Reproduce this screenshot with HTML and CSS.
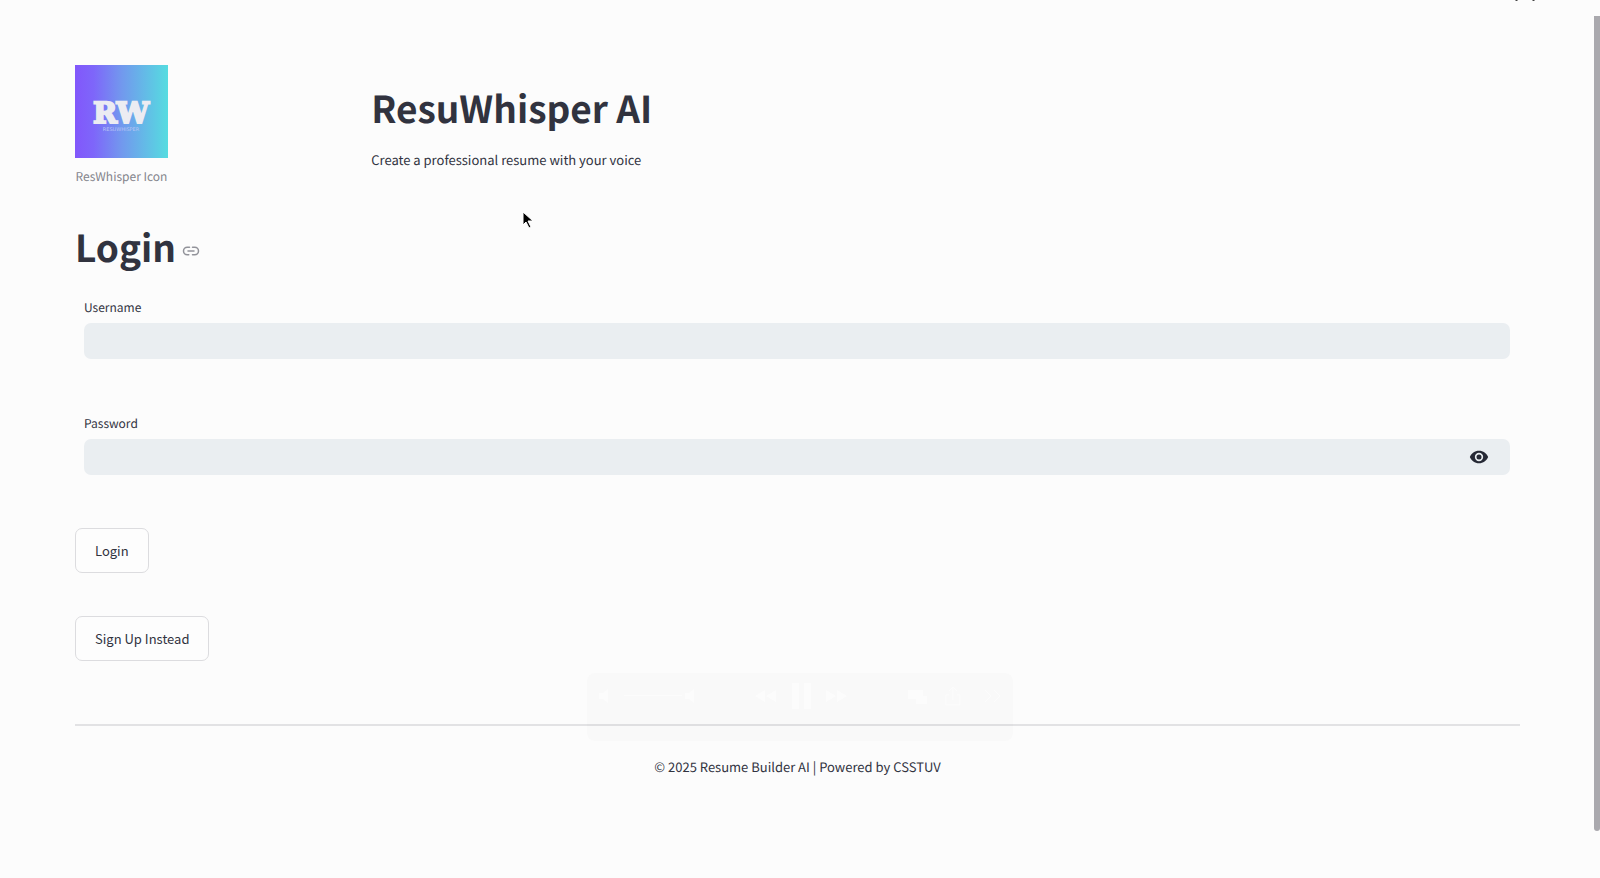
FILE: index.html
```html
<!DOCTYPE html>
<html lang="en">
<head>
<meta charset="utf-8">
<title>ResuWhisper AI</title>
<link rel="stylesheet" href="styles.css">
</head>
<body>
<main class="page">
  <header class="hero">
    <figure class="brand">
      <svg class="logo" viewBox="0 0 93 93" role="img" aria-label="RW">
        <defs>
          <linearGradient id="fade" x1="0" x2="1" y1="0" y2="0">
            <stop offset="0" stop-color="#8257fb"/>
            <stop offset=".2" stop-color="#7e66fa"/>
            <stop offset=".5" stop-color="#7298ee"/>
            <stop offset="1" stop-color="#55dce0"/>
          </linearGradient>
        </defs>
        <rect width="93" height="93" fill="url(#fade)"/>
        <text class="monogram" x="46" y="58" text-anchor="middle">RW</text>
        <text class="wordmark" x="46" y="66" text-anchor="middle">RESUWHISPER</text>
      </svg>
      <figcaption class="caption">ResWhisper Icon</figcaption>
    </figure>
    <div class="intro">
      <h1 class="title">ResuWhisper AI</h1>
      <p class="tagline">Create a professional resume with your voice</p>
    </div>
  </header>

  <form class="login">
    <div class="heading">
      <h1 class="title" id="login">Login</h1>
      <a class="anchor" href="#login" aria-label="Link to Login">
        <svg viewBox="0 0 24 24" fill="none" stroke="currentColor" stroke-width="2" stroke-linecap="round"><path d="M9 17H7A5 5 0 0 1 7 7h3M14 7h3a5 5 0 0 1 0 10h-3M8 12h8"/></svg>
      </a>
    </div>
    <div class="field">
      <label class="label" for="username">Username</label>
      <div class="box"><input class="input" id="username" type="text"></div>
    </div>
    <div class="field">
      <label class="label" for="password">Password</label>
      <div class="box">
        <input class="input" id="password" type="password">
        <button class="reveal" type="button" aria-label="Show password">
          <svg viewBox="0 0 24 24" fill="currentColor"><path fill-rule="evenodd" d="M12 4.500C7 4.500 2.730 7.610 1 12c1.730 4.390 6 7.500 11 7.500s9.270-3.110 11-7.500C21.270 7.610 17 4.500 12 4.500zM12 17a5 5 0 1 1 0-10 5 5 0 0 1 0 10zm0-8a3 3 0 1 0 0 6 3 3 0 0 0 0-6z"/></svg>
        </button>
      </div>
    </div>
    <div class="actions">
      <button class="button" type="button">Login</button>
      <button class="button" type="button">Sign Up Instead</button>
    </div>
  </form>

  <footer class="footer">© 2025 Resume Builder AI | Powered by CSSTUV</footer>
</main>

<div class="player" aria-hidden="true">
  <svg viewBox="0 0 426 68" fill="currentColor">
    <path d="M12 20h4l5-4v14l-5-4h-4zM37 22h58v1H37zM98 20h4l5-4v14l-5-4h-4zM168 23l10-6v12zM179 23l10-6v12zM205 10h7v26h-7zM217 10h7v26h-7zM239 17l10 6-10 6zM250 17l10 6-10 6zM321 17h15v6h4v8h-11v-5h-8z"/>
    <path d="M362 22h-3v10h14V22h-3M366 27V14M362 18l4-4 4 4M398 17l6 6-6 6M407 17l6 6-6 6" fill="none" stroke="currentColor" stroke-width="1"/>
  </svg>
</div>

<svg class="clipped" viewBox="0 0 24 2" aria-hidden="true"><path d="M3 0h3L5 1H4zM20 0h3l-1 1h-1z" fill="#444"/></svg>
<svg class="cursor" viewBox="0 0 12 18" aria-hidden="true"><path d="M1 1v13l3-3 3 6 2-1-3-6h5z" fill="#000" stroke="#fff" stroke-width="1"/></svg>
<div class="scrollbar" aria-hidden="true"></div>
</body>
</html>
```
FILE: styles.css
```css
* { box-sizing: border-box; }

body {
  margin: 0;
  min-height: 100vh;
  overflow: hidden;
  background: #fcfcfc;
  color: #31333f;
  font: 13px/24px "Noto Sans CJK SC", "Noto Sans", sans-serif;
  text-rendering: geometricPrecision;
}

.page { padding: 65px 80px 0 75px; }

.hero {
  display: grid;
  grid-template-columns: 1fr 4fr;
  gap: 9px;
}

.brand {
  display: flex;
  flex-direction: column;
  align-items: center;
  width: 93px;
  margin: 0;
}

.logo { display: block; width: 93px; height: 93px; }

.monogram {
  fill: #ececf2;
  stroke: #ececf2;
  stroke-width: 2;
  font: bold 29px "DejaVu Serif", serif;
}

.wordmark { fill: #b9c4f5; font: 5px "DejaVu Sans", sans-serif; }

.caption {
  margin-top: 8px;
  color: #84858c;
  font-size: 12px;
  line-height: 22px;
  white-space: nowrap;
}

.title {
  margin: 0;
  font-size: 37px;
  font-weight: 700;
  line-height: 48px;
}

.intro { padding-top: 18px; }

.tagline { margin: 17px 0 0; }

.heading {
  display: flex;
  align-items: center;
  gap: 6px;
  margin-top: 34px;
}

.anchor { display: flex; margin-top: 10px; color: #92939a; }
.anchor svg { width: 18px; height: 18px; }

.field { padding: 0 10px 0 9px; }
.heading + .field { margin-top: 26px; }
.field + .field { margin-top: 53px; }

.label {
  display: block;
  margin-bottom: 3px;
  font-size: 12px;
  line-height: 24px;
}

.box {
  display: flex;
  height: 36px;
  border-radius: 7px;
  background: #eaeef1;
}

.input {
  flex: 1;
  min-width: 0;
  padding: 0 12px;
  border: 0;
  border-radius: 7px;
  background: transparent;
  color: inherit;
  font: inherit;
}

.reveal {
  display: flex;
  align-items: center;
  padding: 0 21px;
  border: 0;
  background: transparent;
  color: #262935;
}

.reveal svg { width: 20px; height: 20px; }

.actions {
  display: flex;
  flex-direction: column;
  align-items: flex-start;
  gap: 43px;
  margin-top: 53px;
}

.button {
  height: 45px;
  padding: 0 19px;
  border: 1px solid #dcdcdf;
  border-radius: 7px;
  background: #fdfdfd;
  color: inherit;
  font: inherit;
}

.footer {
  margin-top: 63px;
  padding-top: 29px;
  border-top: 2px solid #e2e2e4;
  text-align: center;
}

.player {
  position: absolute;
  top: 673px;
  left: 50%;
  width: 426px;
  height: 68px;
  margin-left: -213px;
  border-radius: 8px;
  background: rgba(120, 120, 120, .02);
  color: #fcfcfc;
}

.cursor { position: absolute; top: 211px; left: 522px; width: 12px; height: 18px; }

.clipped { position: absolute; top: 0; right: 64px; width: 24px; height: 2px; }

.scrollbar {
  position: absolute;
  top: 16px;
  right: 0;
  width: 6px;
  height: 815px;
  border-radius: 0 0 4px 4px;
  background: #aaa9ae;
}
```
